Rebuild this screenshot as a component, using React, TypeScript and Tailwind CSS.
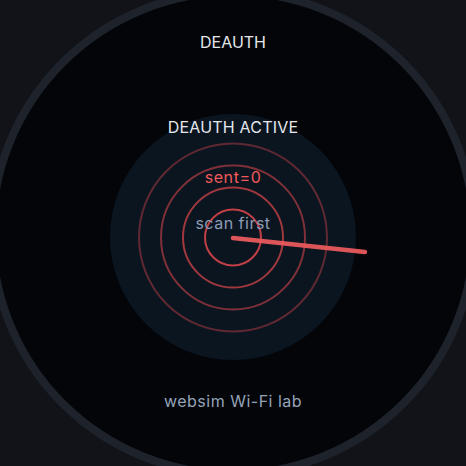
import React from 'react';

const RINGS = [
  { r: 28, opacity: 0.85 },
  { r: 50, opacity: 0.7 },
  { r: 72, opacity: 0.55 },
  { r: 94, opacity: 0.4 },
];

// Radar disc with concentric rings and a sweep line
const Radar: React.FC = () => (
  <div className="relative w-[246px] h-[246px] shrink-0 rounded-full bg-[#0a1520] flex flex-col items-center pt-px">
    <svg
      className="absolute inset-0 overflow-visible"
      width={246}
      height={246}
      viewBox="0 0 246 246"
    >
      {RINGS.map((ring) => (
        <circle
          key={ring.r}
          cx={123}
          cy={123.5}
          r={ring.r}
          fill="none"
          stroke="#e0474c"
          strokeOpacity={ring.opacity}
          strokeWidth={2}
        />
      ))}
      <line
        x1={123}
        y1={124}
        x2={255}
        y2={138}
        stroke="#ee5b5e"
        strokeOpacity={0.92}
        strokeWidth={4.5}
        strokeLinecap="round"
      />
    </svg>
    <div className="relative text-base leading-6 tracking-[0.2px] text-[#e5e7eb]">DEAUTH ACTIVE</div>
    <div className="relative mt-[26px] text-base leading-6 tracking-[0.6px] text-[#f05a5a]">sent=0</div>
    <div className="relative mt-[22px] text-base leading-6 tracking-[0.5px] text-[#8d9cb4]">scan first</div>
  </div>
);

const App: React.FC = () => {
  return (
    <div
      className="w-[466px] h-[466px] overflow-hidden bg-[#111318] flex items-center justify-center"
      style={{ fontFamily: 'Inter, "Liberation Sans", sans-serif' }}
    >
      <div className="w-[490px] h-[490px] shrink-0 rounded-full border-8 border-[#1e232b] bg-[#030509] flex flex-col items-center pt-[34px]">
        <div className="text-base leading-6 text-[#e5e7eb]">DEAUTH</div>
        <div className="mt-[60px]">
          <Radar />
        </div>
        <div className="mt-[29px] text-base leading-6 tracking-[0.5px] text-[#94a3b8]">websim Wi-Fi lab</div>
      </div>
    </div>
  );
};

export default App;
